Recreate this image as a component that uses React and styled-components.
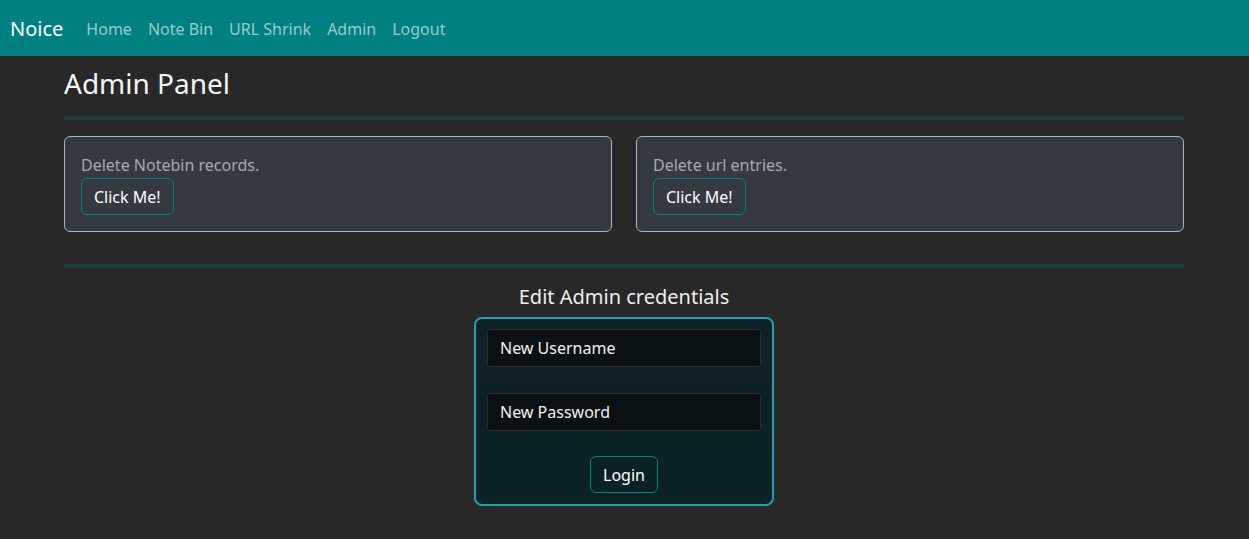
import React from 'react';
import styled, { createGlobalStyle } from 'styled-components';

const GlobalStyle = createGlobalStyle`
  * { box-sizing: border-box; }
  body {
    margin: 0;
    background: #282828;
    color: #dee2e6;
    font-family: 'Noto Sans', 'Open Sans', sans-serif;
    font-size: 16px;
  }
`;

const Navbar = styled.nav`
  height: 56px;
  background: #008080;
  display: flex;
  align-items: center;
  padding: 1px 10px 0;
`;

const Brand = styled.a`
  color: #fff;
  font-size: 20px;
  margin-right: 15px;
  text-decoration: none;
`;

const NavLink = styled.a`
  color: rgba(255, 255, 255, 0.6);
  font-size: 16px;
  padding: 0 8px;
  text-decoration: none;
`;

const Container = styled.main`
  width: 1184px;
  padding-left: 64px;
`;

const Title = styled.h1`
  margin: 10px 0 0;
  font-size: 28px;
  font-weight: 400;
  color: #f5f5f5;
  line-height: 34px;
`;

const Divider = styled.hr`
  border: 0;
  height: 4px;
  background: #1e3e3e;
  margin: ${(p) => p.$margin};
`;

const CardRow = styled.div`
  display: grid;
  grid-template-columns: 1fr 1fr;
  gap: 24px;
`;

const Card = styled.div`
  background: #353a42;
  border: 1px solid #b0b3b8;
  border-radius: 6px;
  padding: 18px 16px 16px;
  height: 96px;
`;

const CardText = styled.p`
  margin: 0;
  color: #a5a9ae;
  line-height: 20px;
`;

const OutlineButton = styled.button`
  background: transparent;
  border: 1px solid #0a7f80;
  border-radius: 6px;
  color: #fff;
  font-family: inherit;
  font-size: 16px;
  height: 37px;
  padding: 0 12px;
  margin-top: ${(p) => p.$top || 0}px;
`;

const Section = styled.section`
  display: flex;
  flex-direction: column;
  align-items: center;
`;

const SectionTitle = styled.h2`
  margin: 0 0 8px;
  font-size: 20px;
  font-weight: 400;
  color: #eee;
  line-height: 24px;
`;

const Form = styled.form`
  width: 300px;
  height: 189px;
  border: 2px solid #2a9db2;
  border-radius: 8px;
  background: linear-gradient(180deg, #0f2229 0%, #0a2226 100%);
  padding: 10px 11px;
  display: flex;
  flex-direction: column;
  align-items: center;
`;

const Input = styled.input`
  width: 100%;
  height: 38px;
  flex-shrink: 0;
  background: #0a1115;
  border: 1px solid #2b2b2b;
  border-radius: 3px;
  color: #fff;
  font-family: inherit;
  font-size: 16px;
  padding: 0 12px;
  margin-bottom: ${(p) => p.$gap}px;
  &::placeholder { color: #f0f0f0; }
`;

export default function App() {
  return (
    <>
      <GlobalStyle />
      <Navbar>
        <Brand>Noice</Brand>
        <NavLink>Home</NavLink>
        <NavLink>Note Bin</NavLink>
        <NavLink>URL Shrink</NavLink>
        <NavLink>Admin</NavLink>
        <NavLink>Logout</NavLink>
      </Navbar>
      <Container>
        <Title>Admin Panel</Title>
        <Divider $margin="16px 0 16px" />
        <CardRow>
          <Card>
            <CardText>Delete Notebin records.</CardText>
            <OutlineButton $top={3}>Click Me!</OutlineButton>
          </Card>
          <Card>
            <CardText>Delete url entries.</CardText>
            <OutlineButton $top={3}>Click Me!</OutlineButton>
          </Card>
        </CardRow>
        <Divider $margin="32px 0 17px" />
        <Section>
          <SectionTitle>Edit Admin credentials</SectionTitle>
          <Form>
            <Input placeholder="New Username" $gap={26} />
            <Input placeholder="New Password" type="password" $gap={25} />
            <OutlineButton type="button">Login</OutlineButton>
          </Form>
        </Section>
      </Container>
    </>
  );
}
